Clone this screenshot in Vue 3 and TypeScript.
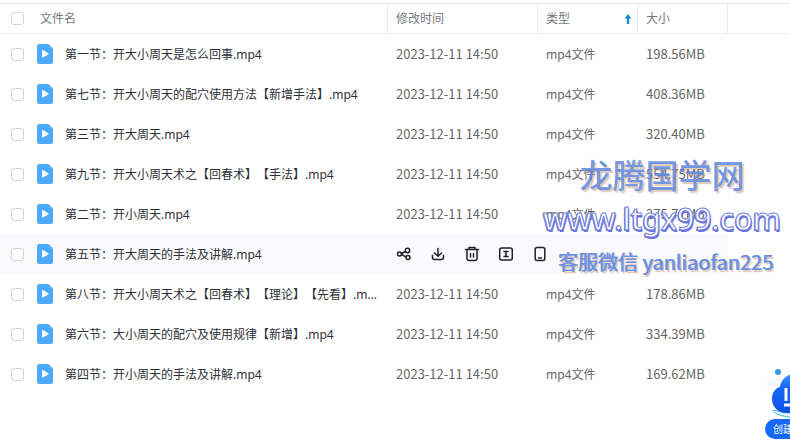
<script setup lang="ts">
import { ref } from 'vue'

interface FileRow {
  name: string
  time: string
  type: string
  size: string
}

const time = '2023-12-11 14:50'
const type = 'mp4文件'
const files: FileRow[] = [
  { name: '第一节：开大小周天是怎么回事.mp4', time, type, size: '198.56MB' },
  { name: '第七节：开大小周天的配穴使用方法【新增手法】.mp4', time, type, size: '408.36MB' },
  { name: '第三节：开大周天.mp4', time, type, size: '320.40MB' },
  { name: '第九节：开大小周天术之【回春术】【手法】.mp4', time, type, size: '554.75MB' },
  { name: '第二节：开小周天.mp4', time, type, size: '275.71MB' },
  { name: '第五节：开大周天的手法及讲解.mp4', time, type, size: '' },
  { name: '第八节：开大小周天术之【回春术】【理论】【先看】.mp4', time, type, size: '178.86MB' },
  { name: '第六节：大小周天的配穴及使用规律【新增】.mp4', time, type, size: '334.39MB' },
  { name: '第四节：开小周天的手法及讲解.mp4', time, type, size: '169.62MB' },
]
const activeIndex = ref(5)
const checked = ref<boolean[]>(files.map(() => false))
const allChecked = ref(false)

function toggleAll() {
  checked.value = files.map(() => allChecked.value)
}
</script>

<template>
  <main class="page">
    <table class="files">
      <colgroup>
        <col />
        <col class="col-time" />
        <col class="col-type" />
        <col class="col-size" />
        <col class="col-rest" />
      </colgroup>
      <thead>
        <tr>
          <th>
            <div class="head-name">
              <input v-model="allChecked" type="checkbox" class="check" aria-label="全选" @change="toggleAll" />
              <span>文件名</span>
            </div>
          </th>
          <th>修改时间</th>
          <th>
            <div class="head-type">
              <span>类型</span>
              <svg width="8" height="10" viewBox="0 0 8 10" aria-hidden="true">
                <path d="M4 0 7.500 4.500H5.200V10H2.800V4.500H0.500Z" fill="#1a8fd0" />
              </svg>
            </div>
          </th>
          <th>大小</th>
          <th></th>
        </tr>
      </thead>
      <tbody>
        <tr v-for="(file, i) in files" :key="file.name" :class="{ active: i === activeIndex }">
          <td>
            <div class="name-cell">
              <input v-model="checked[i]" type="checkbox" class="check" :aria-label="file.name" />
              <svg class="video" width="16" height="20" viewBox="0 0 16 20" aria-hidden="true">
                <path d="M2 0H11.5L16 4.5V18a2 2 0 0 1-2 2H2a2 2 0 0 1-2-2V2a2 2 0 0 1 2-2Z" fill="#4caaf8" />
                <path d="M11.5 0 16 4.5H13a1.5 1.5 0 0 1-1.5-1.5Z" fill="#69b8fa" />
                <path d="M5 6.6c0-.6.5-.8 1-.5l5.2 3.2c.5.3.5.8 0 1.1L6 13.500c-.5.3-1 .1-1-.5Z" fill="#fff" />
              </svg>
              <a href="#" class="name">{{ file.name }}</a>
            </div>
          </td>
          <template v-if="i === activeIndex">
            <td colspan="3">
              <div class="actions">
                <button type="button" aria-label="分享">
                  <svg width="16" height="16" viewBox="0 0 16 16">
                    <circle cx="3.500" cy="8" r="2" />
                    <circle cx="11.500" cy="4.500" r="2.200" />
                    <circle cx="12" cy="11.500" r="2" />
                    <path d="M5.500 7.500 9.500 5.500M5.500 8.500 10 10.800" />
                  </svg>
                </button>
                <button type="button" aria-label="下载">
                  <svg width="16" height="16" viewBox="0 0 16 16">
                    <path d="M8 2.500V10M4.500 7 8 10.300 11.500 7M2.500 9.500v2a2 2 0 0 0 2 2h7a2 2 0 0 0 2-2v-2" />
                  </svg>
                </button>
                <button type="button" aria-label="删除">
                  <svg width="16" height="16" viewBox="0 0 16 16">
                    <path d="M1.500 3.500H14.500M5 3V1.500H11V3M3 4V12.500a2 2 0 0 0 2 2h6a2 2 0 0 0 2-2V4M6.500 7.500v3.500M9.500 7.500v3.500" />
                  </svg>
                </button>
                <button type="button" aria-label="重命名">
                  <svg width="16" height="16" viewBox="0 0 16 16">
                    <rect x="1.700" y="2" width="12.600" height="12" rx="2" />
                    <path d="M6 5.500h4M8 5.500v5M6 10.500h4" />
                  </svg>
                </button>
                <button type="button" aria-label="发送到手机">
                  <svg width="16" height="16" viewBox="0 0 16 16">
                    <rect x="3.200" y="1.500" width="9.600" height="13" rx="2" />
                    <path d="M6.500 12h3" />
                  </svg>
                </button>
              </div>
            </td>
          </template>
          <template v-else>
            <td class="num">{{ file.time }}</td>
            <td>{{ file.type }}</td>
            <td class="num">{{ file.size }}</td>
          </template>
          <td class="rest"></td>
        </tr>
      </tbody>
    </table>

    <div class="watermark">
      <p class="mark-name">龙腾国学网</p>
      <p class="mark-site">www.ltgx99.com</p>
      <p class="mark-contact">客服微信 yanliaofan225</p>
    </div>

    <button type="button" class="create">
      <svg width="46" height="52" viewBox="0 0 46 52" aria-hidden="true">
        <defs>
          <linearGradient id="cloud" x1="0" y1="0" x2="0" y2="1">
            <stop offset="0" stop-color="#3c9cff" />
            <stop offset="0.350" stop-color="#1769f5" />
            <stop offset="1" stop-color="#0d50e6" />
          </linearGradient>
        </defs>
        <path d="M2 14 16 9V18L2 18Z" fill="#f3f7ff" />
        <circle cx="13" cy="4" r="3" fill="#2f9ae8" />
        <path d="M9 42c-2 2 3 5 14 7h23v-4H24C16 44 12 43 9 42Z" fill="#e4fbff" stroke="#37b9e5" />
        <path d="M20 45C12 44 7 38 7 31c0-6 3-11 8-12C16 11 23 5 33 5h13v40Z" fill="url(#cloud)" />
        <path d="M21 20v13M19 37h27" stroke="#fff" stroke-width="3" />
      </svg>
      <span class="create-label">创建</span>
    </button>
  </main>
</template>

<style>
body {
  margin: 0;
  background: #fff;
  overflow: hidden;
}
</style>

<style scoped>
.page {
  position: relative;
  min-height: 100vh;
  padding-top: 3px;
  box-sizing: border-box;
  overflow: hidden;
  font: 12px/20px "Noto Sans", "Noto Sans CJK SC", sans-serif;
  text-spacing-trim: space-all;
  color: #666;
}
.files {
  width: 100%;
  table-layout: fixed;
  border-collapse: separate;
  border-spacing: 0;
}
.col-time { width: 150px; }
.col-type { width: 100px; }
.col-size { width: 90px; }
.col-rest { width: 62px; }
th {
  height: 31px;
  box-sizing: border-box;
  padding: 0 8px;
  border-top: 1px solid #e9e9e9;
  border-bottom: 1px solid #f0f0f0;
  border-right: 1px solid #e9e9e9;
  font-weight: 400;
  text-align: left;
  color: #75797d;
}
th:first-child,
td:first-child { padding-left: 11px; }
th:last-child { border-right: 0; }
td {
  height: 40px;
  box-sizing: border-box;
  padding: 2px 8px 0;
  border-bottom: 1px solid #fff;
}
.num {
  padding-top: 0;
  font-family: "Noto Sans CJK SC", sans-serif;
  font-size: 13px;
}
.active td { background: #fafafc; }
.active .rest { background: none; }
.head-name,
.name-cell,
.head-type {
  display: flex;
  align-items: center;
}
.head-name { gap: 16px; }
.head-type { justify-content: space-between; margin-right: -3px; }
.check {
  appearance: none;
  flex: none;
  width: 13px;
  height: 13px;
  margin: 0;
  border: 1px solid #d4d4d8;
  border-radius: 3px;
  background: #fff;
}
.check:checked { background: #3a9bf5; }
.video { flex: none; margin: 0 12px 2px 13px; }
.name {
  overflow: hidden;
  text-overflow: ellipsis;
  white-space: nowrap;
  color: #2d3036;
  text-decoration: none;
}
.actions { display: flex; gap: 18px; padding-bottom: 2px; }
.actions button {
  display: flex;
  padding: 0;
  border: 0;
  background: none;
}
.actions svg {
  fill: none;
  stroke: #1c2130;
  stroke-width: 1.5;
  stroke-linecap: round;
  stroke-linejoin: round;
}
.watermark {
  position: absolute;
  top: 152px;
  right: 8px;
  width: 240px;
  pointer-events: none;
  text-align: center;
  white-space: nowrap;
}
.watermark p { margin: 0; }
.mark-name {
  font: 500 33px/44px "Noto Sans CJK SC", sans-serif;
  color: rgba(94, 137, 224, 0.85);
  text-shadow: 2px 2px 1px rgba(196, 151, 122, 0.5);
}
.mark-site {
  font: 500 30px/46px "Noto Sans", sans-serif;
  color: #fff;
  -webkit-text-stroke: 1px #7480dc;
  text-shadow: -1px 1px 0 #6672d8, 1px 2px 0 #6672d8;
}
.mark-contact {
  padding-right: 9px;
  font: 400 20px/40px "Noto Sans CJK SC", sans-serif;
  text-align: right;
  color: #6a8edf;
  text-shadow: 1px 0 0 #7f9fe2, 2px 2px 1px rgba(196, 151, 122, 0.6);
}
.create {
  position: absolute;
  top: 368px;
  right: -21px;
  display: flex;
  flex-direction: column;
  align-items: stretch;
  width: 46px;
  padding: 0;
  border: 0;
  background: none;
}
.create-label {
  margin-top: -1px;
  padding-left: 8px;
  border-radius: 10px;
  background: #1668f5;
  color: #fff;
  font: 10px/20px "Noto Sans CJK SC", sans-serif;
  text-align: left;
}
</style>
